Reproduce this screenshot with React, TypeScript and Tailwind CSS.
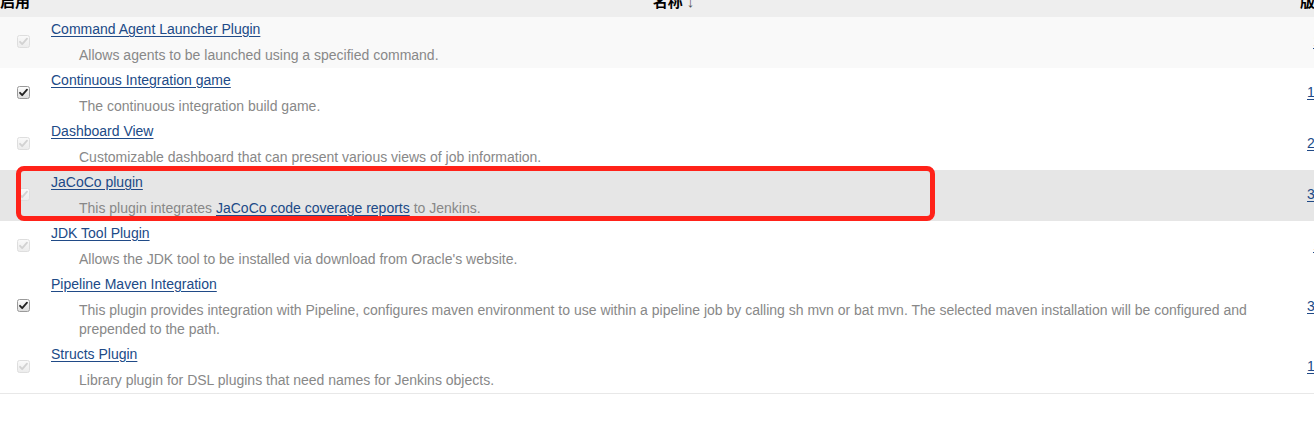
import React from 'react';

interface Plugin {
  name: string;
  description: React.ReactNode;
  version: string;
  checked: boolean;
  disabled: boolean;
  narrow?: boolean;
}

const linkCls = 'text-[#204a87] underline underline-offset-2';

const plugins: Plugin[] = [
  {
    name: 'Command Agent Launcher Plugin',
    description: 'Allows agents to be launched using a specified command.',
    version: '1.4',
    checked: true,
    disabled: true,
    narrow: true,
  },
  {
    name: 'Continuous Integration game',
    description: 'The continuous integration build game.',
    version: '1.26',
    checked: true,
    disabled: false,
  },
  {
    name: 'Dashboard View',
    description: 'Customizable dashboard that can present various views of job information.',
    version: '2.12',
    checked: true,
    disabled: true,
  },
  {
    name: 'JaCoCo plugin',
    description: (
      <>
        This plugin integrates <a className={linkCls}>JaCoCo code coverage reports</a> to Jenkins.
      </>
    ),
    version: '3.0.4',
    checked: true,
    disabled: true,
  },
  {
    name: 'JDK Tool Plugin',
    description: "Allows the JDK tool to be installed via download from Oracle's website.",
    version: '1.4',
    checked: true,
    disabled: true,
    narrow: true,
  },
  {
    name: 'Pipeline Maven Integration',
    description:
      'This plugin provides integration with Pipeline, configures maven environment to use within a pipeline job by calling sh mvn or bat mvn. The selected maven installation will be configured and prepended to the path.',
    version: '3.8.2',
    checked: true,
    disabled: false,
  },
  {
    name: 'Structs Plugin',
    description: 'Library plugin for DSL plugins that need names for Jenkins objects.',
    version: '1.20',
    checked: true,
    disabled: true,
  },
];

// old-style windows checkbox
const Checkbox = ({ checked, disabled }: { checked: boolean; disabled: boolean }) => (
  <svg width="13" height="13" viewBox="0 0 13 13">
    <defs>
      <linearGradient id={disabled ? 'cbd' : 'cbe'} x1="0" y1="0" x2="0" y2="1">
        <stop offset="0" stopColor={disabled ? '#fafafa' : '#ffffff'} />
        <stop offset="1" stopColor={disabled ? '#ececec' : '#dcdcdc'} />
      </linearGradient>
    </defs>
    <rect
      x="0.5"
      y="0.5"
      width="12"
      height="12"
      rx="2"
      fill={`url(#${disabled ? 'cbd' : 'cbe'})`}
      stroke={disabled ? '#dedede' : '#9a9a9a'}
    />
    {checked && (
      <path
        d="M3 6.8 L5.2 9.2 L10 3.6"
        fill="none"
        stroke={disabled ? '#d2d2d2' : '#222'}
        strokeWidth="1.8"
        strokeLinecap="round"
        strokeLinejoin="round"
      />
    )}
  </svg>
);

const App = () => {
  return (
    <div className="relative w-[1314px] h-[447px] overflow-hidden bg-white font-['Liberation_Sans','Noto_Sans_CJK_SC',sans-serif] text-[14px]">
      {/* table header, scrolled partly out of view */}
      <div className="flex h-[17px] overflow-hidden bg-[#eeeeee] font-bold text-black">
        <div className="w-[47px] shrink-0 -mt-[8px] leading-[20px] text-[15px]">启用</div>
        <div className="w-[1253px] shrink-0 -mt-[8px] leading-[20px] text-center text-[15px]">
          名称 <span className="font-normal text-[#555]">↓</span>
        </div>
        <div className="w-[80px] shrink-0 -mt-[8px] leading-[20px] text-[15px]">版本</div>
      </div>

      <div className="border-b border-[#e8e8e8]">
        {plugins.map((p, i) => (
          <div
            key={p.name}
            className={`flex ${i === 0 ? 'bg-[#f9f9f9]' : i === 3 ? 'bg-[#e6e6e6]' : 'bg-white'}`}
          >
            <div className="w-[47px] shrink-0 flex items-center justify-center pb-[3px]">
              <Checkbox checked={p.checked} disabled={p.disabled} />
            </div>
            <div className="w-[1253px] shrink-0 pl-[4px] pr-[8px] pt-[2px] pb-[3px]">
              <div className="leading-[20px]">
                <a className={linkCls}>{p.name}</a>
              </div>
              <div className="mt-[7px] pl-[28px] leading-[19px] text-[#888888]">{p.description}</div>
            </div>
            <div className={`w-[80px] shrink-0 flex items-center pb-[2px] ${p.narrow ? 'pl-[13px]' : 'pl-[7px]'}`}>
              <a className={linkCls}>{p.version}</a>
            </div>
          </div>
        ))}
      </div>

      {/* annotation box drawn over the screenshot */}
      <div className="absolute left-[16px] top-[166px] w-[919px] h-[55px] rounded-[8px] border-[5px] border-[#ff2219]" />
    </div>
  );
};

export default App;
